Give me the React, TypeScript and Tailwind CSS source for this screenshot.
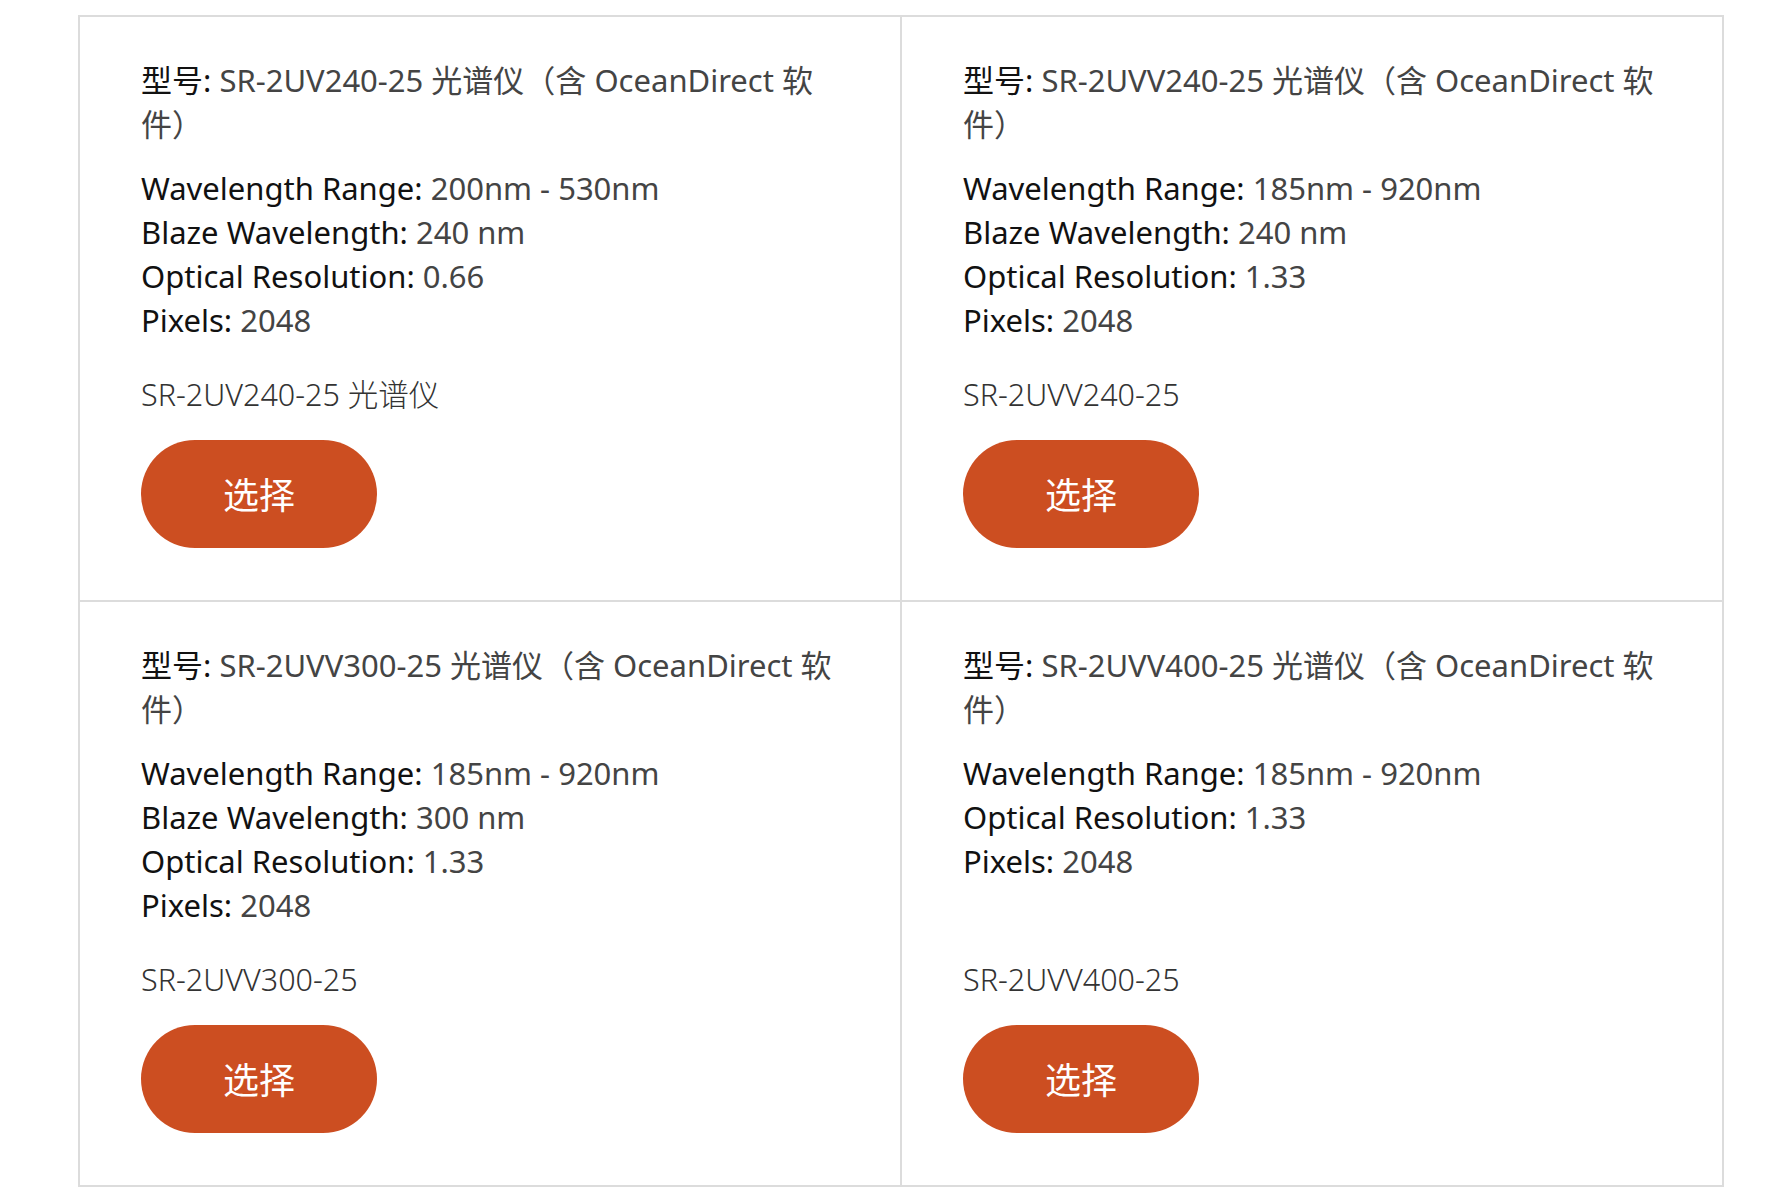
import React from "react";

type Item = {
  model: string;
  specs: [string, string][];
  code: string;
};

const items: Item[] = [
  {
    model: "SR-2UV240-25 光谱仪（含 OceanDirect 软件）",
    specs: [
      ["Wavelength Range:", "200nm - 530nm"],
      ["Blaze Wavelength:", "240 nm"],
      ["Optical Resolution:", "0.66"],
      ["Pixels:", "2048"],
    ],
    code: "SR-2UV240-25 光谱仪",
  },
  {
    model: "SR-2UVV240-25 光谱仪（含 OceanDirect 软件）",
    specs: [
      ["Wavelength Range:", "185nm - 920nm"],
      ["Blaze Wavelength:", "240 nm"],
      ["Optical Resolution:", "1.33"],
      ["Pixels:", "2048"],
    ],
    code: "SR-2UVV240-25",
  },
  {
    model: "SR-2UVV300-25 光谱仪（含 OceanDirect 软件）",
    specs: [
      ["Wavelength Range:", "185nm - 920nm"],
      ["Blaze Wavelength:", "300 nm"],
      ["Optical Resolution:", "1.33"],
      ["Pixels:", "2048"],
    ],
    code: "SR-2UVV300-25",
  },
  {
    model: "SR-2UVV400-25 光谱仪（含 OceanDirect 软件）",
    specs: [
      ["Wavelength Range:", "185nm - 920nm"],
      ["Optical Resolution:", "1.33"],
      ["Pixels:", "2048"],
    ],
    code: "SR-2UVV400-25",
  },
];

function Card({ item }: { item: Item }) {
  return (
    <div className="flex flex-col border-r-2 border-b-2 border-[#dcdcdc] pl-[61px] pr-[50px] pt-[41px] pb-[52px] h-[585px]">
      <div className="text-[31px] leading-[44px] text-[#444]">
        <span className="text-[#111]">型号:</span> {item.model}
      </div>
      <div className="mt-[20px] text-[31px] leading-[44px]">
        {item.specs.map(([k, v]) => (
          <div key={k}>
            <span className="text-[#111]">{k}</span>{" "}
            <span className="text-[#444]">{v}</span>
          </div>
        ))}
      </div>
      <div className="mt-auto text-[30.5px] leading-[44px] font-light text-[#333]">
        {item.code}
      </div>
      <button className="mt-[24px] w-[236px] h-[108px] rounded-full bg-[#cc4e21] text-white text-[36px] leading-none pt-[4px]">
        选择
      </button>
    </div>
  );
}

export default function App() {
  return (
    <div
      className="bg-white min-h-[1202px] pt-[15px] pl-[78px]"
      style={{ fontFamily: '"Noto Sans", "Noto Sans CJK SC", sans-serif' }}
    >
      <div className="grid grid-cols-[822px_822px] w-[1646px] border-t-2 border-l-2 border-[#dcdcdc]">
        {items.map((it) => (
          <Card key={it.code} item={it} />
        ))}
      </div>
    </div>
  );
}
